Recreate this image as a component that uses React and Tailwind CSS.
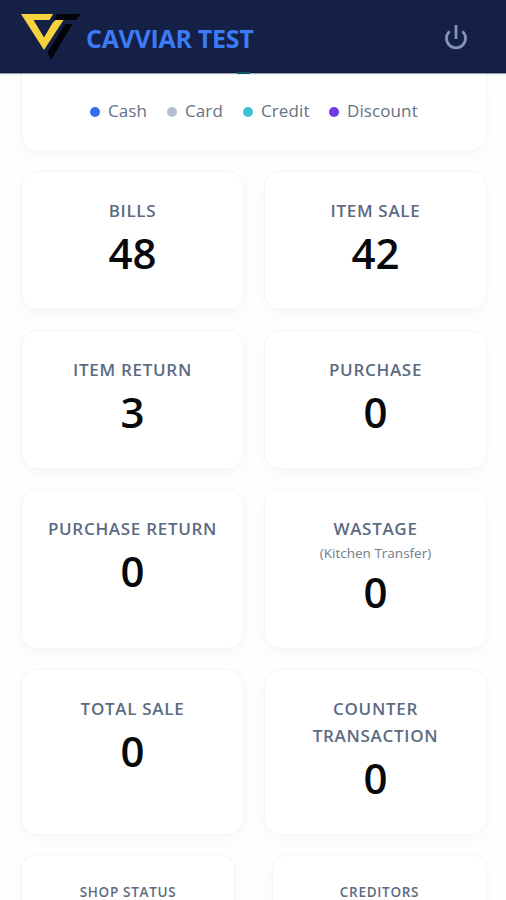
const legend = [
  { label: "Cash", color: "bg-[#2f6fed]", width: "w-[77px]" },
  { label: "Card", color: "bg-[#b4bfcb]", width: "w-[76px]" },
  { label: "Credit", color: "bg-[#3fc1d3]", width: "w-[86px]" },
  { label: "Discount", color: "bg-[#6a3de8]", width: "w-[90px]" },
];

const stats = [
  { label: "BILLS", value: "48", height: "h-[139px]" },
  { label: "ITEM SALE", value: "42", height: "h-[139px]" },
  { label: "ITEM RETURN", value: "3", height: "h-[139px]" },
  { label: "PURCHASE", value: "0", height: "h-[139px]" },
  { label: "PURCHASE RETURN", value: "0", height: "h-[160px]" },
  { label: "WASTAGE", note: "(Kitchen Transfer)", value: "0", height: "h-[160px]" },
  { label: "TOTAL SALE", value: "0", height: "h-[166px]" },
  { label: "COUNTER TRANSACTION", value: "0", height: "h-[166px]" },
];

const card =
  "rounded-2xl border border-[#f3f5f8] bg-white shadow-[0_5px_14px_rgba(15,23,42,0.03)]";

function Logo() {
  return (
    <svg className="mt-[14px] h-[46px] w-[60px] shrink-0" viewBox="0 0 60 46">
      <path d="M36 0H59L55.500 6H32.500zM51.500 10L30 46L26.500 38.500L44 10z" fill="#02040a" />
      <path
        d="M0 0H32L28.500 6H12.500L23 23.500L31.500 9L34.500 6H42.500L23 36z"
        fill="#f6d33c"
      />
    </svg>
  );
}

function PowerIcon() {
  return (
    <svg
      className="h-[25px] w-[24px]"
      viewBox="0 0 24 25"
      fill="none"
      stroke="#8593b5"
      strokeWidth="2.800"
    >
      <path d="M12 0V14M5.600 6.300A9.500 9.500 0 1 0 18.400 6.300" />
    </svg>
  );
}

function StatCard({ label, note, value, height }) {
  return (
    <div className={`${card} ${height} flex flex-col items-center px-5 pt-[25px] text-center`}>
      <div className="text-[17px] leading-[27px] font-semibold tracking-[0.7px] text-[#5b6b82]">
        {label}
      </div>
      {note && (
        <div className="mt-px text-[13.500px] leading-[21px] text-[#6f7a8a]">{note}</div>
      )}
      <div
        className={`${note ? "mt-[3px]" : "mt-[4px]"} text-[42px] leading-[50px] font-semibold text-[#07090c]`}
      >
        {value}
      </div>
    </div>
  );
}

export default function App() {
  return (
    <div className="flex h-[900px] w-[506px] flex-col overflow-hidden bg-[#fefefe] font-['Open_Sans','Noto_Sans',sans-serif]">
      <header className="z-10 flex h-[73px] shrink-0 border-b border-[#0b1534] bg-[#142045] pr-[38px] pl-[21px] shadow-[0_1px_1px_rgba(20,32,69,0.4)]">
        <Logo />
        <h1 className="mt-[21px] ml-[5px] flex-1 text-[25px] leading-[34px] font-bold tracking-[-0.3px] whitespace-nowrap text-[#3b7cf6]">
          CAVVIAR TEST
        </h1>
        <div className="mt-[25px]">
          <PowerIcon />
        </div>
        <span className="absolute top-[72px] left-[237px] h-[2px] w-[13px] bg-[#0b5568]" />
      </header>
      <main className="flex flex-col pr-[19px] pl-[21px]">
        <section className={`${card} flex h-[78px] items-center rounded-t-none border-t-0 pb-[1px] pl-[68px]`}>
          {legend.map((item) => (
            <div key={item.label} className={`flex shrink-0 items-center ${item.width}`}>
              <span className={`mt-[1px] mr-[8px] size-[10px] shrink-0 rounded-full ${item.color}`} />
              <span className="text-[17px] leading-[26px] tracking-[0.1px] text-[#667183]">
                {item.label}
              </span>
            </div>
          ))}
        </section>
        <section className="mt-[20px] grid grid-cols-[223px_223px] gap-x-[20px] gap-y-[20px]">
          {stats.map((stat) => (
            <StatCard key={stat.label} {...stat} />
          ))}
        </section>
        <section className="mt-[19px] flex justify-between">
          {["SHOP STATUS", "CREDITORS"].map((label) => (
            <div
              key={label}
              className={`${card} h-[120px] w-[214px] pt-[26px] text-center text-[13.5px] leading-[22px] font-semibold tracking-[0.7px] text-[#5b6b82] last:w-[215px]`}
            >
              {label}
            </div>
          ))}
        </section>
      </main>
    </div>
  );
}
